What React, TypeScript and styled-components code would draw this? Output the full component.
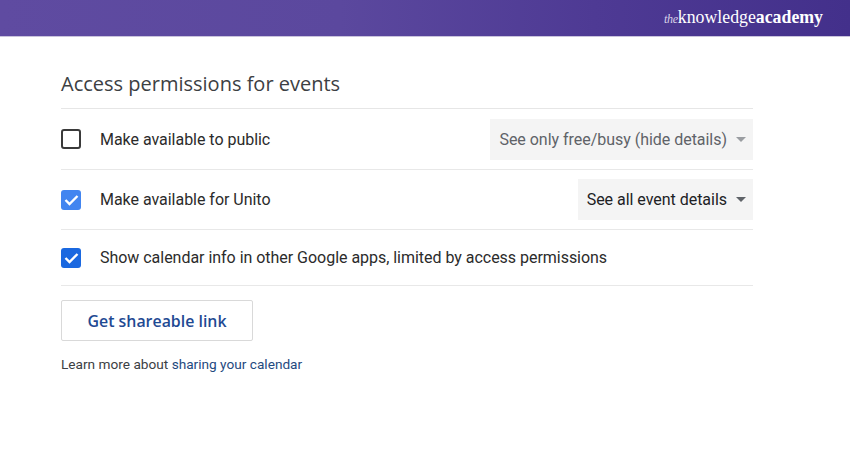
import React from 'react';
import styled, { createGlobalStyle } from 'styled-components';

const GlobalStyle = createGlobalStyle`
    html, body {
        margin: 0;
        padding: 0;
        background: #fff;
    }
    body {
        width: 850px;
        height: 450px;
        overflow: hidden;
        font-family: Roboto, "Liberation Sans", sans-serif;
    }
`;

const Banner = styled.header`
    height: 36px;
    display: flex;
    align-items: center;
    justify-content: flex-end;
    padding-right: 27px;
    background: linear-gradient(90deg, #5f4ba1 0%, #5b489e 40%, #4e3a94 70%, #43308b 100%);
    border-bottom: 1px solid #c9c3dc;
`;

const Logo = styled.div`
    font-family: "Liberation Serif", serif;
    font-size: 17.8px;
    color: #fff;
    padding-bottom: 1px;
    i {
        font-size: 12px;
        letter-spacing: -0.3px;
        color: #d8d2e8;
    }
    b {
        font-weight: 700;
    }
`;

const Content = styled.main`
    width: 692px;
    margin-left: 61px;
    padding-top: 34px;
`;

const Title = styled.h2`
    margin: 0;
    height: 37px;
    font-family: "Open Sans", sans-serif;
    font-size: 20px;
    line-height: 26px;
    font-weight: 400;
    color: #3c4043;
    border-bottom: 1px solid #e6e6e6;
`;

const Row = styled.div<{ $height: number }>`
    height: ${(props) => props.$height}px;
    display: flex;
    align-items: center;
    border-bottom: 1px solid #e8e8e8;
`;

const Box = styled.span<{ $color?: string }>`
    width: 20px;
    height: 20px;
    box-sizing: border-box;
    flex: none;
    border-radius: 3px;
    display: flex;
    align-items: center;
    justify-content: center;
    background: ${(props) => props.$color || '#fff'};
    border: ${(props) => (props.$color ? 'none' : '2px solid #3a3a3a')};
`;

const RowLabel = styled.span`
    margin-left: 19px;
    flex: 1;
    font-size: 16px;
    letter-spacing: -0.03px;
    color: #2b2b2b;
`;

const Select = styled.div<{ $muted?: boolean }>`
    height: 41px;
    padding: 0 7px 0 9px;
    display: flex;
    align-items: center;
    gap: 9px;
    background: #f4f4f4;
    font-size: 16px;
    letter-spacing: -0.03px;
    color: ${(props) => (props.$muted ? '#5f6368' : '#202124')};
`;

const Caret = styled.span<{ $muted?: boolean }>`
    width: 0;
    height: 0;
    border-left: 5px solid transparent;
    border-right: 5px solid transparent;
    border-top: 5px solid ${(props) => (props.$muted ? '#9a9da1' : '#5f6368')};
`;

const LinkButton = styled.button`
    display: block;
    width: 192px;
    height: 41px;
    margin-top: 14px;
    background: #fff;
    border: 1px solid #d9d9d9;
    border-radius: 2px;
    font-family: "Open Sans", sans-serif;
    font-size: 15.9px;
    font-weight: 600;
    color: #1f4a93;
`;

const Help = styled.p`
    margin: 15px 0 0;
    font-size: 13.65px;
    color: #3c4043;
    a {
        color: #1f4a80;
        text-decoration: none;
    }
`;

const tick = (
    <svg width="15" height="12" viewBox="0 0 15 12" fill="none">
        <path d="M1.5 6 L5.5 10 L13.5 2" stroke="#fff" strokeWidth="2.4" />
    </svg>
);

export default function App() {
    return (
        <>
            <GlobalStyle />
            <Banner>
                <Logo><i>the</i>knowledge<b>academy</b></Logo>
            </Banner>
            <Content>
                <Title>Access permissions for events</Title>
                <Row $height={60}>
                    <Box />
                    <RowLabel>Make available to public</RowLabel>
                    <Select $muted>
                        See only free/busy (hide details)
                        <Caret $muted />
                    </Select>
                </Row>
                <Row $height={59}>
                    <Box $color="#4285f0">{tick}</Box>
                    <RowLabel>Make available for Unito</RowLabel>
                    <Select>
                        See all event details
                        <Caret />
                    </Select>
                </Row>
                <Row $height={55}>
                    <Box $color="#1a68e0">{tick}</Box>
                    <RowLabel>Show calendar info in other Google apps, limited by access permissions</RowLabel>
                </Row>
                <LinkButton type="button">Get shareable link</LinkButton>
                <Help>Learn more about <a href="#sharing">sharing your calendar</a></Help>
            </Content>
        </>
    );
}
